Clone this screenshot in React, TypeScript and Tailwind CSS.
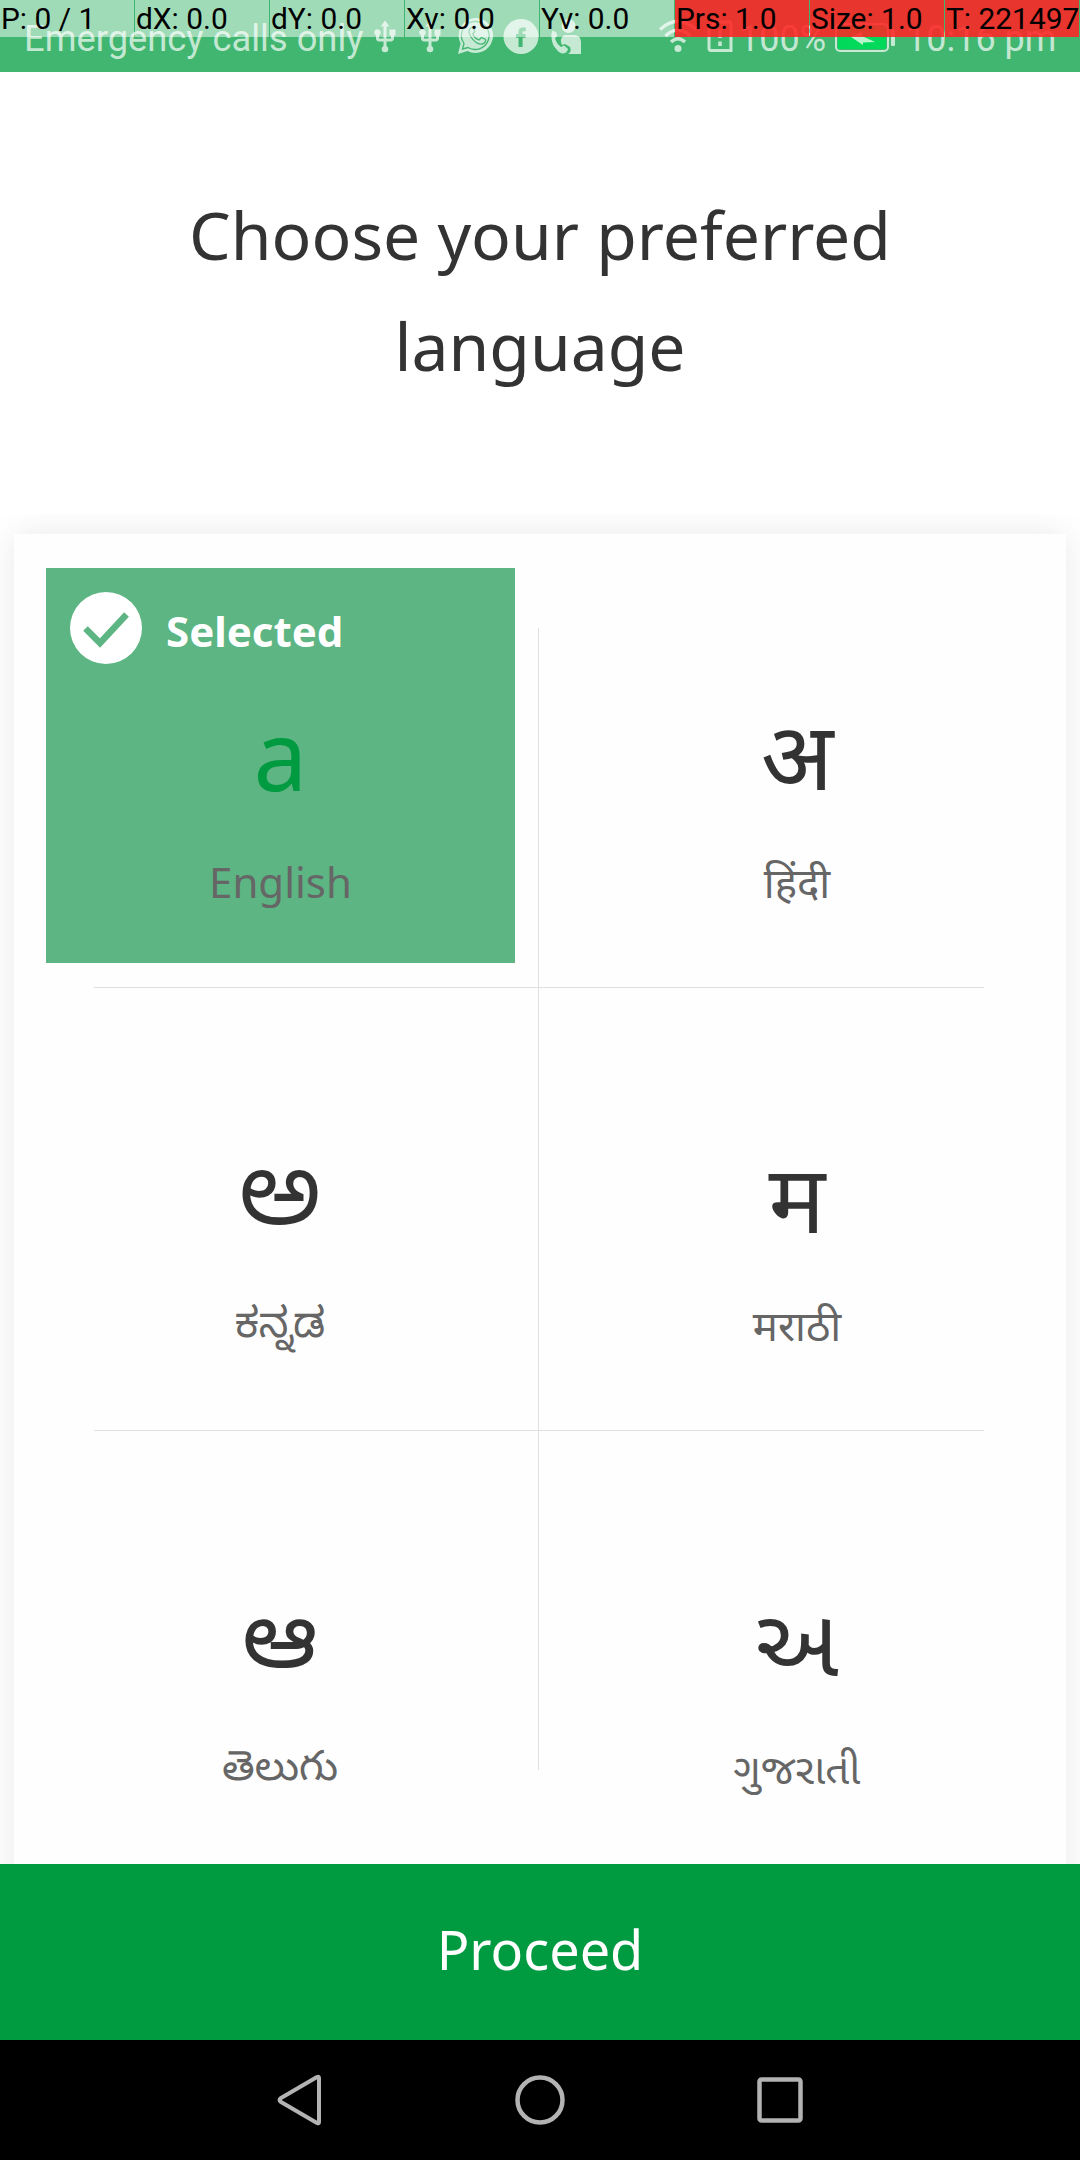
import { MdUsb } from "react-icons/md";

const debugCells = [
  { text: "P: 0 / 1", hot: false },
  { text: "dX: 0.0", hot: false },
  { text: "dY: 0.0", hot: false },
  { text: "Xv: 0.0", hot: false },
  { text: "Yv: 0.0", hot: false },
  { text: "Prs: 1.0", hot: true },
  { text: "Size: 1.0", hot: true },
  { text: "T: 221497", hot: true },
];

function PointerOverlay() {
  return (
    <div className="absolute inset-x-0 top-0 flex h-[37px] gap-px text-[29.9px] leading-[37px] text-black">
      {debugCells.map((c) => (
        <div
          key={c.text}
          className={
            c.hot
              ? "w-[134px] shrink-0 whitespace-nowrap bg-[#ff2323]/88 pl-px"
              : "w-[134px] shrink-0 whitespace-nowrap bg-white/50 pl-px"
          }
        >
          {c.text}
        </div>
      ))}
    </div>
  );
}

function WhatsAppIcon() {
  return (
    <svg viewBox="0 0 36 36" className="ml-2.5 size-9 shrink-0">
      <path fill="currentColor" d="M18.500 0A17.500 17.500 0 1 1 9.500 33L0 36L2.600 25.500A17.500 17.500 0 0 1 18.500 0Z" />
      <path fill="none" stroke="#41b670" strokeWidth="1.300" d="M18.500 3.500A14 14 0 1 1 10 29.500L4.500 31L6 25.500A14 14 0 0 1 18.500 3.500Z" />
      <path fill="none" stroke="#41b670" strokeWidth="1.300" d="M13.500 9.500C10 11 10.500 15 13 19C16 23.500 20 26.500 24 26C27 25.500 28 23 27.500 21.500L23.500 19.500L21 22C18.500 21 15.500 18 14.800 15.800L16.800 13.500L15.200 9.500Z" />
    </svg>
  );
}

function FacebookIcon() {
  return (
    <svg viewBox="0 0 36 36" className="mt-px ml-[9px] size-9 shrink-0">
      <circle cx="18" cy="17.500" r="17.500" fill="currentColor" />
      <path fill="#41b670" d="M15.500 28V18.800H13V15H15.500V12.500C15.500 9.500 17.500 8.500 19.500 8.500H22.800V12.300H20.800C19.800 12.300 19.600 12.800 19.600 13.500V15H22.800L22.400 18.800H19.600V28Z" />
    </svg>
  );
}

function ContactCallIcon() {
  return (
    <svg viewBox="0 0 32 36" className="ml-3 h-9 w-8 shrink-0" fill="currentColor">
      <circle cx="17.500" cy="8" r="7" />
      <path d="M13 17H24Q30 18 30 24V36H17Q21 34 19 29L14 26L11 27Q9 23 10.500 20Z" />
      <path d="M1.500 12.500L5 14L6.500 18L4 20Q5.500 26 10 29L13 27.500L17 31Q16 35.500 11 35.500Q8 35 6 32Q1 27 0.500 20Q0 15 1.500 12.500Z" />
    </svg>
  );
}

function StatusBar() {
  return (
    <header className="relative h-[72px] shrink-0 overflow-hidden bg-[#41b670] font-['Roboto',sans-serif]">
      <div className="flex h-full items-start pt-[18px] text-white/70">
        <span className="ml-6 w-[343px] shrink-0 text-[36.3px] leading-[42px] whitespace-nowrap">
          Emergency calls only
        </span>
        <MdUsb className="mt-px size-9 shrink-0" />
        <MdUsb className="mt-px ml-[9px] size-9 shrink-0" />
        <WhatsAppIcon />
        <FacebookIcon />
        <ContactCallIcon />
        <svg viewBox="0 0 40 34" className="mt-px ml-[75px] h-[34px] w-10 shrink-0" fill="none" stroke="currentColor" strokeWidth="3.500">
          <path d="M2 10.500Q20 -6 38 10.500M7.500 17Q20 5 32.500 17M13 23Q20 16.500 27 23" />
          <circle cx="20" cy="29.500" r="3.500" fill="currentColor" stroke="none" />
        </svg>
        <svg viewBox="0 0 26 32" className="mt-0.5 ml-[9px] h-8 w-[26px] shrink-0" fill="none" stroke="currentColor" strokeWidth="3">
          <path d="M2 9L9 2H22Q24 2 24 4V30.500H4Q2 30.500 2 28Z" />
          <path strokeWidth="3.500" d="M13 9V18M13 21.500V26" />
        </svg>
        <span className="ml-1.5 w-[89px] shrink-0 text-[36px] leading-[42px]">100%</span>
        <svg viewBox="0 0 62 30" className="mt-[5px] ml-[7px] h-[30px] w-[62px] shrink-0">
          <rect x="1" y="1" width="52" height="27" rx="4" fill="none" stroke="currentColor" strokeWidth="2" />
          <rect x="3" y="3" width="48" height="23" fill="#00d95a" />
          <path d="M16 14L27 9V13L40 19L28 19.500V22Z" fill="#b8f5cf" />
          <rect x="56" y="6" width="4" height="17" rx="1" fill="currentColor" />
        </svg>
        <span className="ml-[9px] text-[36px] leading-[42px] whitespace-nowrap">10:16 pm</span>
      </div>
      <PointerOverlay />
    </header>
  );
}

type Language = { glyph: string; name: string; selected?: boolean; raised?: boolean };

const languages: Language[] = [
  { glyph: "a", name: "English", selected: true },
  { glyph: "अ", name: "हिंदी" },
  { glyph: "ಅ", name: "ಕನ್ನಡ", raised: true },
  { glyph: "म", name: "मराठी" },
  { glyph: "ఆ", name: "తెలుగు", raised: true },
  { glyph: "અ", name: "ગુજરાતી" },
];

function LanguageCell({ glyph, name, selected, raised }: Language) {
  return (
    <div
      className={
        selected
          ? "relative h-[395px] w-[469px] bg-[#5cb582] pt-[120px] text-center"
          : raised
            ? "h-[395px] w-[468px] pt-[111px] text-center"
            : "h-[395px] w-[468px] pt-[120px] text-center"
      }
    >
      {selected && (
        <div className="absolute top-6 left-6 flex items-center">
          <svg viewBox="0 0 72 72" className="size-[72px]">
            <circle cx="36" cy="36" r="36" fill="#fff" />
            <path d="M15.500 36.500L30 51L56.500 22.500" fill="none" stroke="#5cb582" strokeWidth="6.500" />
          </svg>
          <span className="mt-1 ml-6 text-[42px] leading-[57px] font-bold text-white">Selected</span>
        </div>
      )}
      <div
        className={
          selected
            ? "h-[131px] text-[96px] leading-[131px] text-[#009b41]"
            : "h-[131px] text-[95px] leading-[131px] text-[#333333]"
        }
      >
        {glyph}
      </div>
      <div
        className={
          raised
            ? "mt-[39px] h-[57px] text-[42px] leading-[57px] text-[#666666]"
            : "mt-[34px] h-[57px] text-[42px] leading-[57px] text-[#666666]"
        }
      >
        {name}
      </div>
    </div>
  );
}

export default function App() {
  return (
    <div className="flex h-[2160px] w-[1080px] flex-col overflow-hidden bg-white font-['Noto_Sans','Noto_Sans_Devanagari','Noto_Sans_Kannada','Noto_Sans_Telugu','Noto_Sans_Gujarati',sans-serif]">
      <StatusBar />
      <h1 className="h-[442px] shrink-0 px-24 pt-[107px] text-center text-[66px] leading-[111px] font-normal text-[#333333]">
        Choose your preferred language
      </h1>
      <main className="h-[1350px] shrink-0 overflow-hidden px-3.5 pt-5">
        <section className="relative h-[1400px] bg-[#fefefe] shadow-[0_0_32px_rgba(0,0,0,0.09)]">
          <div className="grid auto-rows-[443px] grid-cols-[517px_469px] pt-[34px] pl-8">
            {languages.map((l) => (
              <LanguageCell key={l.name} {...l} />
            ))}
          </div>
          <div className="absolute top-[94px] left-[524px] h-[1142px] w-px bg-[#e0e0e0]" />
          <div className="absolute top-[453px] left-20 h-px w-[890px] bg-[#e0e0e0]" />
          <div className="absolute top-[896px] left-20 h-px w-[890px] bg-[#e0e0e0]" />
        </section>
      </main>
      <button className="h-[176px] shrink-0 bg-[#009b41] pb-1.5 text-[54px] text-white">Proceed</button>
      <nav className="flex h-[120px] shrink-0 items-center justify-center gap-[180px] bg-black text-[#b3b3b3]">
        <svg viewBox="0 0 60 60" className="size-[60px]" fill="none" stroke="currentColor" strokeWidth="4" strokeLinejoin="round">
          <path d="M49 8V52Q49 54 47 53L11 32Q8 30 11 28L47 7Q49 6 49 8Z" />
        </svg>
        <svg viewBox="0 0 60 60" className="size-[60px]" fill="none" stroke="currentColor" strokeWidth="4.500">
          <circle cx="30" cy="30" r="22.500" />
        </svg>
        <svg viewBox="0 0 60 60" className="size-[60px]" fill="none" stroke="currentColor" strokeWidth="4.500">
          <rect x="9.500" y="9.500" width="41" height="41" rx="2" />
        </svg>
      </nav>
    </div>
  );
}
